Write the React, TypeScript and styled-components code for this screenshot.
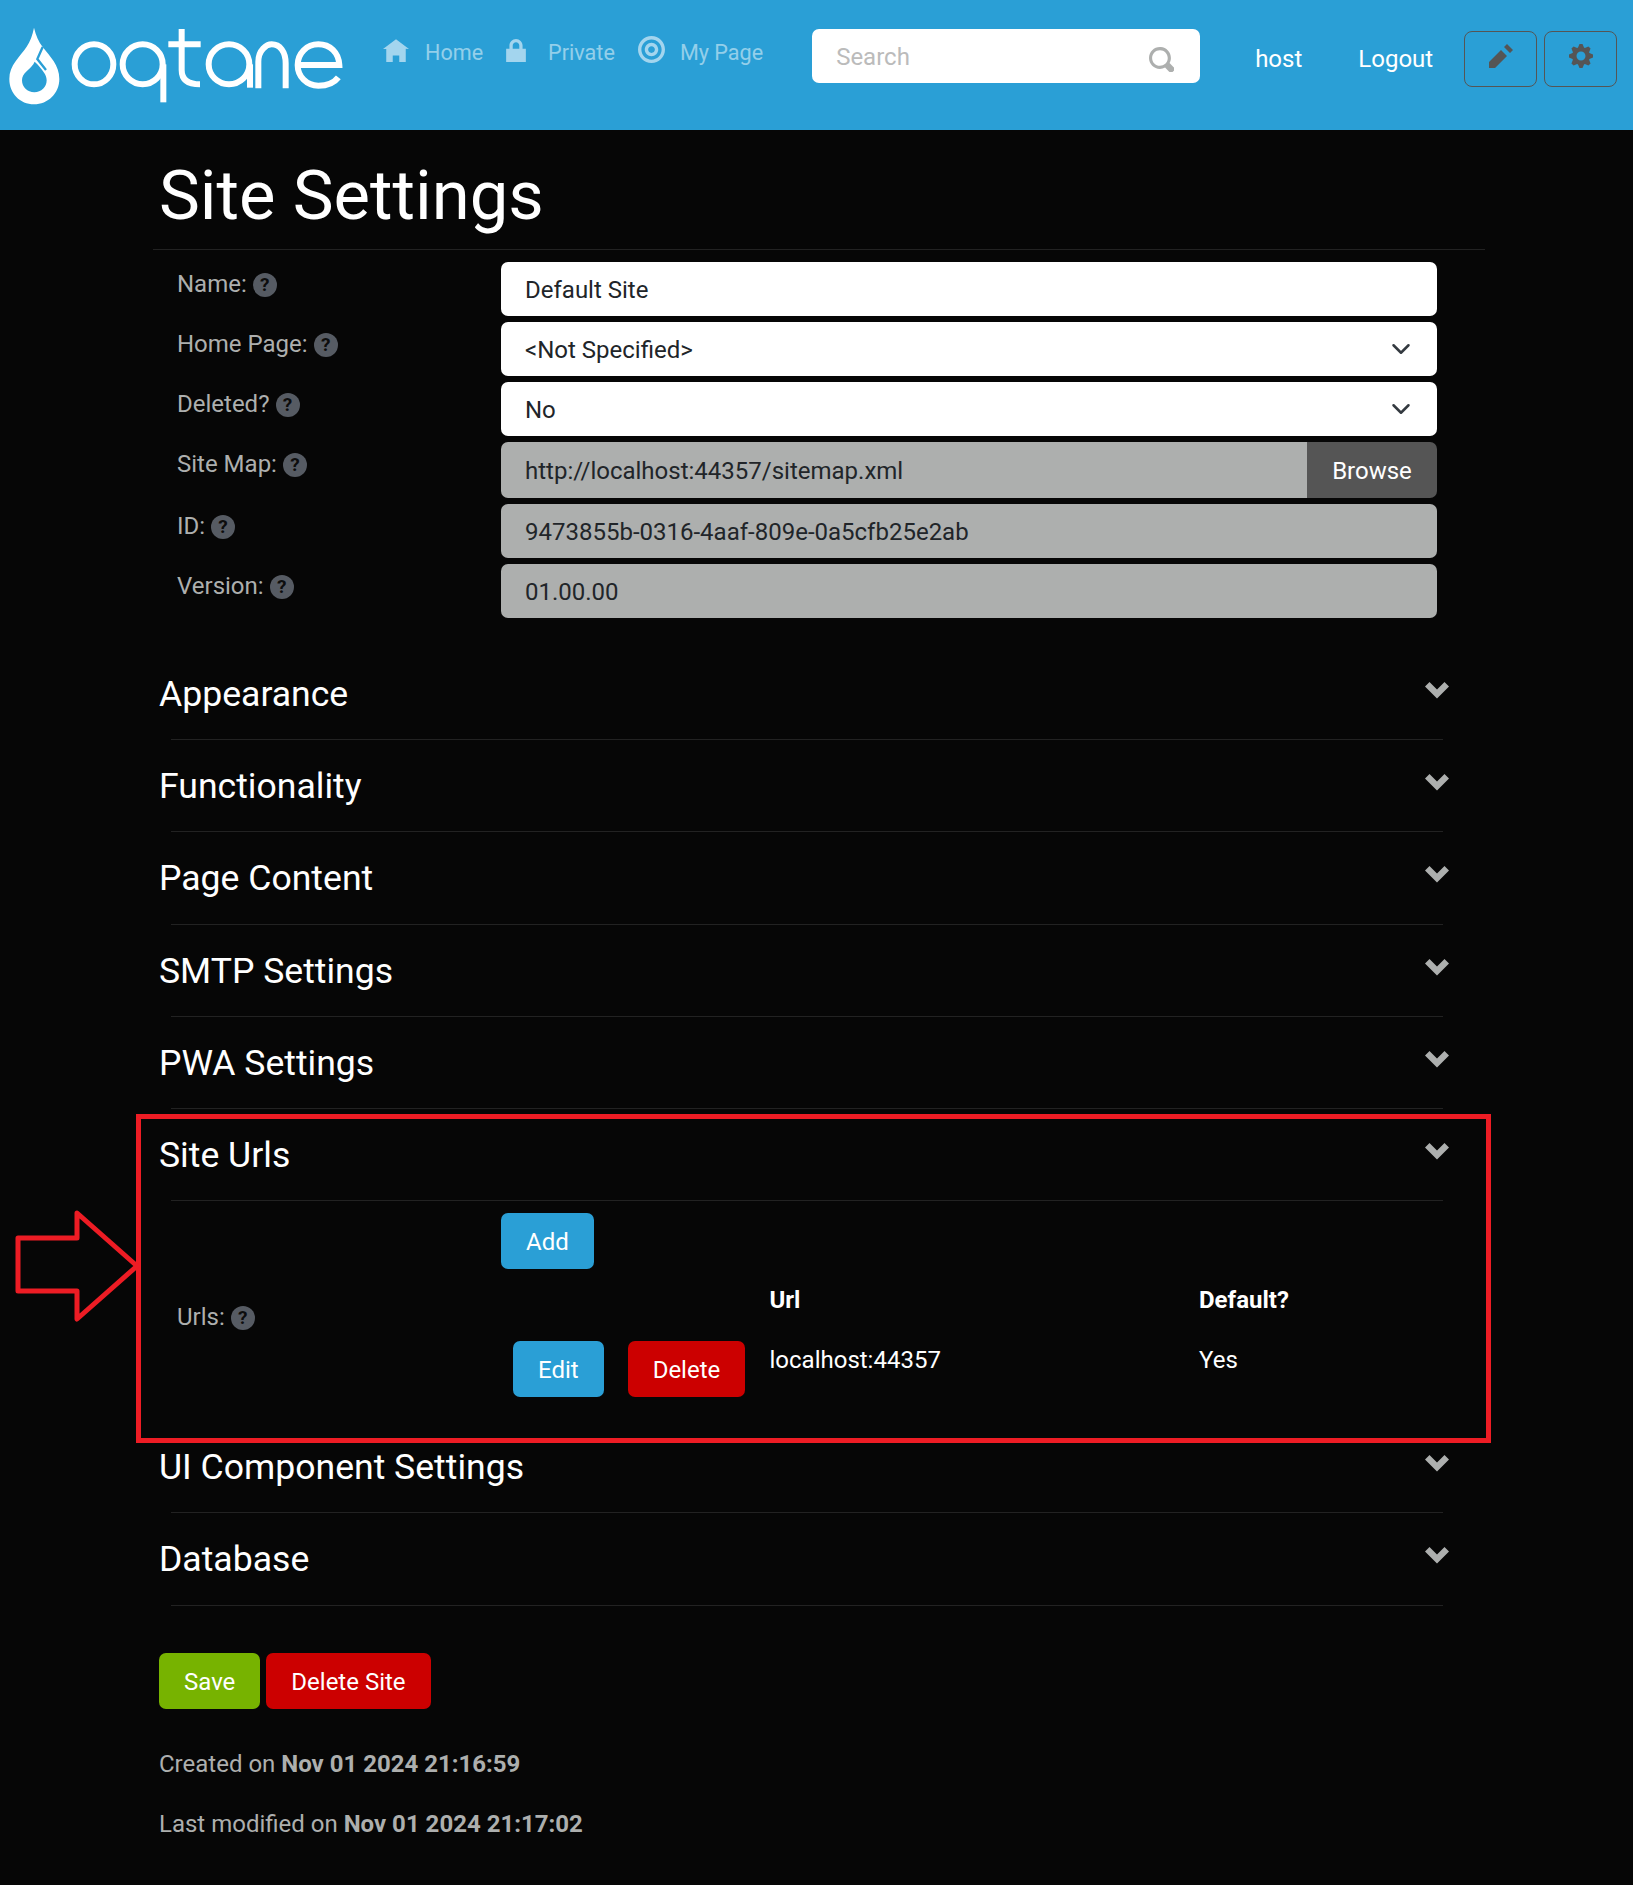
import styled, { createGlobalStyle } from "styled-components"

const GlobalStyle = createGlobalStyle`
	html, body {
		margin: 0;
		padding: 0;
		background: #060606;
		overflow: hidden;
	}
	body {
		font-family: Roboto, "Liberation Sans", sans-serif;
		font-size: 24px;
		line-height: 36px;
		color: #adafae;
	}
`

const Page = styled.div`
	position: relative;
	width: 1633px;
	height: 1885px;
`

const Header = styled.header`
	display: flex;
	align-items: flex-start;
	height: 130px;
	background: #2a9fd6;
`

const LogoMark = styled.svg`
	flex: none;
	width: 360px;
	height: 100px;
	margin: 15px 23px 0 0;
`

const Nav = styled.nav`
	display: flex;
	gap: 23px;
	margin-top: 35px;
`

const NavLink = styled.a`
	display: flex;
	align-items: flex-start;
	gap: 16px;
	color: rgba(255, 255, 255, 0.5);
	font-size: 21.6px;
`

const NavIcon = styled.svg<{ $kind: "home" | "lock" | "target" }>`
	flex: none;
	width: ${(p) => (p.$kind === "target" ? "27px" : p.$kind === "lock" ? "20px" : "26px")};
	height: ${(p) => (p.$kind === "target" ? "27px" : "23px")};
	margin: ${(p) => (p.$kind === "target" ? "1px -1px 0 0" : p.$kind === "lock" ? "4px 6px 0 0" : "4px 0 0")};
	fill: #a3d5ee;
`

const SearchBox = styled.div`
	display: flex;
	align-items: center;
	justify-content: space-between;
	box-sizing: border-box;
	width: 388px;
	height: 54px;
	margin: 29px 0 0 49px;
	padding: 1px 26px 0 24px;
	background: #fff;
	border-radius: 7px;
	color: #bbb;
`

const SearchIcon = styled.svg`
	width: 25px;
	height: 25px;
	margin-top: 5px;
	fill: #adafae;
`

const UserLink = styled.a`
	margin: 41px 0 0 56px;
	color: #fff;
	&:first-of-type {
		margin-left: 55px;
	}
`

const ToolButton = styled.button<{ $first?: boolean }>`
	display: flex;
	align-items: center;
	justify-content: center;
	box-sizing: border-box;
	width: 73px;
	height: 56px;
	margin: 31px 0 0 ${(p) => (p.$first ? "31px" : "7px")};
	padding: 0 0 6px;
	background: transparent;
	border: 1.4px solid #555;
	border-radius: 8px;
	svg {
		width: 24px;
		height: 24px;
		fill: #555;
	}
`

const Main = styled.main`
	width: 1332px;
	margin-left: 153px;
`

const Title = styled.h1`
	box-sizing: border-box;
	height: 120px;
	margin: 0;
	padding: 23px 0 0 6px;
	border-bottom: 1.4px solid #222;
	color: #fff;
	font-size: 68.8px;
	font-weight: 400;
	line-height: 86px;
`

const Form = styled.div`
	display: flex;
	flex-direction: column;
	gap: 6px;
	margin: 12px 0 30px;
`

const Row = styled.div`
	display: flex;
`

const Label = styled.label`
	display: flex;
	align-items: center;
	flex: none;
	gap: 6px;
	box-sizing: border-box;
	width: 348px;
	height: 44px;
	padding-left: 24px;
`

const Help = styled.span`
	display: flex;
	align-items: center;
	justify-content: center;
	width: 24px;
	height: 24px;
	margin-top: 2px;
	background: #565b63;
	border-radius: 50%;
	color: #0d0d0d;
	font-size: 19px;
	font-weight: 700;
	line-height: 24px;
`

const Field = styled.div<{ $disabled?: boolean }>`
	display: flex;
	align-items: center;
	justify-content: space-between;
	box-sizing: border-box;
	width: 936px;
	height: 54px;
	padding: 1px 26px 0 24px;
	background: ${(p) => (p.$disabled ? "#adafae" : "#fff")};
	border-radius: 7px;
	color: #212529;
`

const InputGroup = styled.div`
	display: flex;
	width: 936px;
	height: 56px;
	overflow: hidden;
	border-radius: 7px;
	${Field} {
		flex: 1;
		height: 56px;
		border-radius: 0;
	}
`

const Browse = styled.div`
	display: flex;
	align-items: center;
	justify-content: center;
	width: 130px;
	padding-top: 1px;
	background: #555;
	color: #fff;
`

const Caret = styled.svg`
	width: 20px;
	height: 20px;
	margin-top: -1px;
	fill: none;
	stroke: #343a40;
	stroke-width: 2;
	stroke-linecap: round;
	stroke-linejoin: round;
`

const Section = styled.section`
	margin-left: 6px;
`

const SectionHeader = styled.div`
	display: flex;
	justify-content: space-between;
	align-items: flex-start;
	box-sizing: border-box;
	width: 1290px;
	height: 92.2px;
	padding-top: 26px;
	position: relative;
	&::after {
		content: "";
		position: absolute;
		left: 12px;
		right: 6px;
		bottom: 0;
		border-bottom: 1.4px solid #222;
	}
`

const SectionTitle = styled.h4`
	margin: 0;
	color: #fff;
	font-size: 35.6px;
	font-weight: 400;
	line-height: 41px;
`

const Chevron = styled.svg`
	width: 24px;
	height: 24px;
	margin: 5px 0 0;
	fill: #adafae;
`

const UrlsBody = styled.div`
	display: flex;
	align-items: center;
	padding-top: 12px;
`

const UrlsLabel = styled(Label)`
	width: 342px;
	height: 48px;
	padding-left: 18px;
`

const UrlsColumn = styled.div`
	display: flex;
	flex-direction: column;
	padding-bottom: 24px;
`

const UrlsGrid = styled.div`
	display: grid;
	grid-template-columns: 268.5px 429.5px 238px;
	grid-template-rows: 62px auto;
`

const HeadCell = styled.div`
	align-self: center;
	padding-bottom: 1px;
	color: #fff;
	font-weight: 700;
`

const RowActions = styled.div`
	display: flex;
	gap: 24px;
	padding: 10px 0 0 12px;
`

const UrlCell = styled.div`
	padding-top: 11px;
	color: #fff;
`

const Button = styled.button<{ $tone: "blue" | "red" | "green" }>`
	box-sizing: border-box;
	height: 56px;
	padding: 2px 25px 0;
	border: none;
	border-radius: 7px;
	background: ${(p) => (p.$tone === "blue" ? "#2a9fd6" : p.$tone === "red" ? "#c00" : "#77b300")};
	color: #fff;
	font: inherit;
	align-self: flex-start;
`

const Actions = styled.div`
	display: flex;
	gap: 6px;
	margin: 47px 0 37px 6px;
`

const Stamp = styled.p`
	margin: 0 0 24px 6px;
	b {
		font-weight: 700;
	}
`

const RedFrame = styled.div`
	position: absolute;
	left: 136px;
	top: 1114px;
	box-sizing: border-box;
	width: 1355px;
	height: 329px;
	border: 5.5px solid #ed1c24;
	pointer-events: none;
`

const RedArrow = styled.svg`
	position: absolute;
	left: 10px;
	top: 1206px;
	width: 130px;
	height: 120px;
	fill: none;
	stroke: #ed1c24;
	stroke-width: 5;
	stroke-linejoin: round;
	pointer-events: none;
`

const sections = ["Appearance", "Functionality", "Page Content", "SMTP Settings", "PWA Settings"]
const arrowPath = "M8 32 H67 V7 L127 60 L67 113 V85 H8 Z"

function HelpIcon() {
	return <Help>?</Help>
}

function Logo() {
	return (
		<LogoMark viewBox="0 0 1080 300">
			<path
				fill="#fff"
				d="M102 38C108 62 116 80 128 96C150 125 178 150 178 192C178 235 144 268 102 268C60 268 28 235 28 192C28 150 60 125 80 95C90 80 98 60 102 38Z"
			/>
			<path fill="#2a9fd6" d="M100 148C88 165 66 175 66 196C66 216 82 232 103 232C124 232 140 216 140 196C140 178 126 165 112 148L104 140Z" />
			<path fill="none" stroke="#2a9fd6" strokeWidth="7" d="M128 96L112 132L138 165" />
			<g fill="none" stroke="#fff" strokeWidth="18">
				<ellipse cx="282" cy="148" rx="58" ry="60" />
				<ellipse cx="428" cy="148" rx="60" ry="60" />
				<path d="M490 262V148" />
				<path d="M545 42V165C545 195 565 208 600 208M505 88H602" />
				<ellipse cx="687" cy="148" rx="61" ry="60" />
				<path d="M750 218V148" />
				<path d="M775 220V140C775 105 800 88 815 88C840 88 857 110 857 145V220" />
				<path d="M893 150H1018C1016 112 990 88 955 88C920 88 893 115 893 150C893 185 920 212 955 212C982 212 1003 203 1015 187" />
			</g>
		</LogoMark>
	)
}

function SelectCaret() {
	return (
		<Caret viewBox="0 0 16 16">
			<path d="M2 5l6 6 6-6" />
		</Caret>
	)
}

function SectionHead({ title }: { title: string }) {
	return (
		<SectionHeader>
			<SectionTitle>{title}</SectionTitle>
			<Chevron viewBox="0 0 8 8">
				<path transform="translate(0 1)" d="M1.5 0l-1.5 1.5 4 4 4-4-1.5-1.5-2.5 2.5-2.5-2.5z" />
			</Chevron>
		</SectionHeader>
	)
}

export default function App() {
	return (
		<Page>
			<GlobalStyle />
			<Header>
				<Logo />
				<Nav>
					<NavLink>
						<NavIcon $kind="home" viewBox="0 0 8 7">
							<path d="M4 0l-4 3h1v4h2v-2h2v2h2v-4.03l1 .03-4-3z" />
						</NavIcon>
						Home
					</NavLink>
					<NavLink>
						<NavIcon $kind="lock" viewBox="0 0 6 7">
							<path d="M3 0c-1.1 0-2 .9-2 2v1h-1v4h6v-4h-1v-1c0-1.1-.9-2-2-2zm0 1c.56 0 1 .44 1 1v1h-2v-1c0-.56.44-1 1-1z" />
						</NavIcon>
						Private
					</NavLink>
					<NavLink>
						<NavIcon $kind="target" viewBox="0 0 8 8">
							<path d="M4 0c-2.2 0-4 1.8-4 4s1.8 4 4 4 4-1.8 4-4-1.8-4-4-4zm0 1c1.66 0 3 1.34 3 3s-1.34 3-3 3-3-1.34-3-3 1.34-3 3-3zm0 1c-1.1 0-2 .9-2 2s.9 2 2 2 2-.9 2-2-.9-2-2-2zm0 1c.56 0 1 .44 1 1s-.44 1-1 1-1-.44-1-1 .44-1 1-1z" />
						</NavIcon>
						My Page
					</NavLink>
				</Nav>
				<SearchBox>
					Search
					<SearchIcon viewBox="0 0 8 8">
						<path d="M3.5 0c-1.93 0-3.5 1.57-3.5 3.5s1.57 3.5 3.5 3.5c.59 0 1.17-.14 1.66-.41a1 1 0 0 0 .13.13l1 1a1.02 1.02 0 1 0 1.44-1.44l-1-1a1 1 0 0 0-.16-.13c.27-.49.44-1.06.44-1.66 0-1.93-1.57-3.5-3.5-3.5zm0 1c1.39 0 2.5 1.11 2.5 2.5 0 .66-.24 1.27-.66 1.72-.01.01-.02.02-.03.03a1 1 0 0 0-.13.13c-.44.4-1.04.63-1.69.63-1.39 0-2.5-1.11-2.5-2.5s1.11-2.5 2.5-2.5z" />
					</SearchIcon>
				</SearchBox>
				<UserLink>host</UserLink>
				<UserLink>Logout</UserLink>
				<ToolButton $first>
					<svg viewBox="0 0 8 8">
						<path d="M6 0l-1 1 2 2 1-1-2-2zm-2 2l-4 4v2h2l4-4-2-2z" />
					</svg>
				</ToolButton>
				<ToolButton>
					<svg viewBox="0 0 8 8">
						<path d="M3.5 0l-.5 1.19c-.1.03-.19.08-.28.13l-1.19-.5-.72.72.5 1.19c-.05.1-.09.18-.13.28l-1.19.5v1l1.19.5c.04.1.08.18.13.28l-.5 1.19.72.72 1.19-.5c.09.04.18.09.28.13l.5 1.19h1l.5-1.19c.09-.04.19-.08.28-.13l1.19.5.72-.72-.5-1.19c.04-.09.09-.19.13-.28l1.19-.5v-1l-1.19-.5c-.03-.09-.08-.19-.13-.28l.5-1.19-.72-.72-1.19.5c-.09-.04-.19-.09-.28-.13l-.5-1.19h-1zm.5 2.5c.83 0 1.5.67 1.5 1.5s-.67 1.5-1.5 1.5-1.5-.67-1.5-1.5.67-1.5 1.5-1.5z" />
					</svg>
				</ToolButton>
			</Header>
			<Main>
				<Title>Site Settings</Title>
				<Form>
					<Row>
						<Label>Name: <HelpIcon /></Label>
						<Field>Default Site</Field>
					</Row>
					<Row>
						<Label>Home Page: <HelpIcon /></Label>
						<Field>&lt;Not Specified&gt;<SelectCaret /></Field>
					</Row>
					<Row>
						<Label>Deleted? <HelpIcon /></Label>
						<Field>No<SelectCaret /></Field>
					</Row>
					<Row>
						<Label>Site Map: <HelpIcon /></Label>
						<InputGroup>
							<Field $disabled>http://localhost:44357/sitemap.xml</Field>
							<Browse>Browse</Browse>
						</InputGroup>
					</Row>
					<Row>
						<Label>ID: <HelpIcon /></Label>
						<Field $disabled>9473855b-0316-4aaf-809e-0a5cfb25e2ab</Field>
					</Row>
					<Row>
						<Label>Version: <HelpIcon /></Label>
						<Field $disabled>01.00.00</Field>
					</Row>
				</Form>
				{sections.map((s) => (
					<Section key={s}>
						<SectionHead title={s} />
					</Section>
				))}
				<Section>
					<SectionHead title="Site Urls" />
					<UrlsBody>
						<UrlsLabel>Urls: <HelpIcon /></UrlsLabel>
						<UrlsColumn>
							<Button $tone="blue">Add</Button>
							<UrlsGrid>
								<div />
								<HeadCell>Url</HeadCell>
								<HeadCell>Default?</HeadCell>
								<RowActions>
									<Button $tone="blue">Edit</Button>
									<Button $tone="red">Delete</Button>
								</RowActions>
								<UrlCell>localhost:44357</UrlCell>
								<UrlCell>Yes</UrlCell>
							</UrlsGrid>
						</UrlsColumn>
					</UrlsBody>
				</Section>
				<Section>
					<SectionHead title="UI Component Settings" />
				</Section>
				<Section>
					<SectionHead title="Database" />
				</Section>
				<Actions>
					<Button $tone="green">Save</Button>
					<Button $tone="red">Delete Site</Button>
				</Actions>
				<Stamp>Created on <b>Nov 01 2024 21:16:59</b></Stamp>
				<Stamp>Last modified on <b>Nov 01 2024 21:17:02</b></Stamp>
			</Main>
			<RedFrame />
			<RedArrow viewBox="0 0 130 120">
				<path d={arrowPath} />
			</RedArrow>
		</Page>
	)
}
